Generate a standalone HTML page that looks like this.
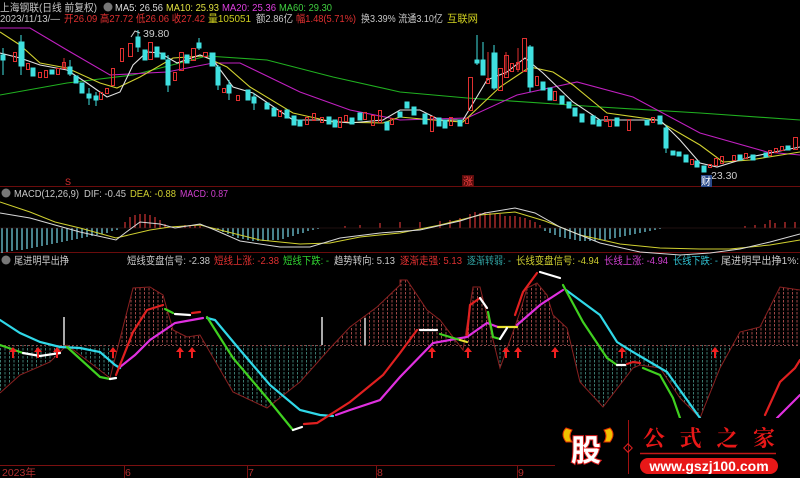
<!DOCTYPE html>
<html><head><meta charset="utf-8"><style>
body{margin:0;background:#000;width:800px;height:478px;overflow:hidden;font-family:"Liberation Sans","Noto Sans CJK SC",sans-serif}
svg{position:absolute;left:0;top:0;font-family:"Liberation Sans","Noto Sans CJK SC",sans-serif;font-size:10.5px}
</style></head><body>
<svg width="800" height="478" viewBox="0 0 800 478">
<defs>
<pattern id="hr" width="4.5" height="4" patternUnits="userSpaceOnUse"><rect x="0" y="0" width="1" height="2.5" fill="#a04848"/></pattern>
<pattern id="hg" width="4.5" height="4" patternUnits="userSpaceOnUse"><rect x="0" y="0" width="1" height="2.5" fill="#3c7a70"/></pattern>
<clipPath id="up"><rect x="0" y="260" width="800" height="85"/></clipPath>
<clipPath id="dn"><rect x="0" y="345" width="800" height="120"/></clipPath>
</defs>
<line x1="0" y1="186.5" x2="800" y2="186.5" stroke="#6a0c0c"/>
<line x1="0" y1="252.5" x2="800" y2="252.5" stroke="#6a0c0c"/>
<line x1="0" y1="465.5" x2="555" y2="465.5" stroke="#7a1010"/>
<g stroke="#7a1010"><line x1="124.5" y1="465" x2="124.5" y2="478"/><line x1="247.5" y1="465" x2="247.5" y2="478"/><line x1="376.5" y1="465" x2="376.5" y2="478"/><line x1="517.5" y1="465" x2="517.5" y2="478"/></g>
<g fill="#b03030"><text x="2" y="476">2023年</text><text x="125" y="476">6</text><text x="248" y="476">7</text><text x="377" y="476">8</text><text x="518" y="476">9</text></g>

<g lengthAdjust="spacingAndGlyphs">
<text x="0" y="11" fill="#c8c8c8" textLength="97" lengthAdjust="spacingAndGlyphs">上海钢联(日线 前复权)</text>
<text x="115" y="11" fill="#ddd" textLength="48" lengthAdjust="spacingAndGlyphs">MA5: 26.56</text>
<text x="166" y="11" fill="#e0e040" textLength="53" lengthAdjust="spacingAndGlyphs">MA10: 25.93</text>
<text x="222" y="11" fill="#e040e0" textLength="54" lengthAdjust="spacingAndGlyphs">MA20: 25.36</text>
<text x="279" y="11" fill="#40d040" textLength="53" lengthAdjust="spacingAndGlyphs">MA60: 29.30</text>
<text x="0" y="22" fill="#c8c8c8" textLength="60" lengthAdjust="spacingAndGlyphs">2023/11/13/—</text>
<text x="64" y="22" fill="#e03030" textLength="141" lengthAdjust="spacingAndGlyphs">开26.09 高27.72 低26.06 收27.42</text>
<text x="208" y="22" fill="#d0d020" textLength="43" lengthAdjust="spacingAndGlyphs">量105051</text>
<text x="256" y="22" fill="#c8c8c8" textLength="37" lengthAdjust="spacingAndGlyphs">额2.86亿</text>
<text x="296" y="22" fill="#e03030" textLength="60" lengthAdjust="spacingAndGlyphs">幅1.48(5.71%)</text>
<text x="361" y="22" fill="#c8c8c8" textLength="82" lengthAdjust="spacingAndGlyphs">换3.39% 流通3.10亿</text>
<text x="447" y="22" fill="#d0d020" textLength="31" lengthAdjust="spacingAndGlyphs">互联网</text>
</g>
<circle cx="108" cy="7" r="4.5" fill="#777"/>

<g fill="none" stroke-width="1.1">
<polyline stroke="#20b020" points="0,95 67,83 133,75 207,56 267,60 333,77 400,92 467,98 600,107 700,113 800,120"/>
<polyline stroke="#c020c0" points="0,28 30,28 67,50 110,75 167,72 213,63 240,63 300,92 350,110 400,120 467,118 517,95 577,82 633,97 700,133 767,152 800,155"/>
<polyline stroke="#d0d030" points="0,32 20,45 40,63 67,68 100,83 117,88 140,77 173,58 203,56 227,67 250,87 293,113 333,122 383,123 400,117 433,120 463,122 500,87 530,67 553,72 573,85 607,113 657,120 700,145 723,162 750,160 800,152"/>
<polyline stroke="#e0e0e0" points="0,53 20,58 40,65 67,70 87,83 107,97 120,92 133,65 147,52 160,53 177,63 200,55 213,60 233,87 253,93 293,120 320,120 350,123 383,120 400,110 420,110 440,120 463,120 487,80 507,72 525,58 543,73 573,102 600,120 660,120 680,140 700,163 717,167 750,157 800,147"/>
</g>
<g stroke-width="1">
<g stroke="#40e0e0" fill="#40e0e0">
<line x1="3" y1="48" x2="3" y2="75"/><rect x="1" y="55" width="4" height="5"/>
<line x1="21" y1="35" x2="21" y2="75"/><rect x="19" y="42" width="5" height="24"/>
<rect x="31" y="68" width="4" height="8"/><rect x="50" y="70" width="4" height="4"/>
<line x1="70" y1="60" x2="70" y2="76"/><rect x="68" y="67" width="4" height="7"/>
<rect x="74" y="76" width="4" height="7"/><rect x="80" y="83" width="4" height="10"/>
<line x1="89" y1="88" x2="89" y2="105"/><rect x="87" y="94" width="4" height="4"/>
<line x1="96" y1="92" x2="96" y2="106"/><rect x="94" y="96" width="4" height="4"/>
<line x1="138" y1="30" x2="138" y2="52"/><rect x="136" y="37" width="4" height="10"/>
<rect x="143" y="50" width="4" height="10"/><rect x="155" y="47" width="4" height="10"/><rect x="161" y="53" width="4" height="6"/>
<line x1="168" y1="55" x2="168" y2="92"/><rect x="166" y="60" width="4" height="25"/>
<rect x="185" y="55" width="4" height="8"/><line x1="199" y1="38" x2="199" y2="50"/><rect x="197" y="43" width="4" height="5"/>
<rect x="210" y="53" width="5" height="13"/><line x1="218" y1="65" x2="218" y2="90"/><rect x="216" y="67" width="4" height="18"/>
<line x1="229" y1="80" x2="229" y2="100"/><rect x="227" y="85" width="4" height="8"/>
<rect x="246" y="90" width="4" height="10"/><line x1="254" y1="93" x2="254" y2="110"/><rect x="252" y="97" width="4" height="6"/>
<rect x="265" y="103" width="4" height="6"/><rect x="272" y="108" width="4" height="8"/><rect x="285" y="110" width="4" height="8"/>
<rect x="292" y="116" width="4" height="9"/><rect x="298" y="120" width="4" height="6"/><rect x="327" y="117" width="4" height="7"/>
<rect x="333" y="120" width="4" height="7"/><rect x="350" y="118" width="4" height="6"/><rect x="358" y="113" width="4" height="7"/>
<rect x="385" y="122" width="4" height="8"/><rect x="398" y="112" width="4" height="5"/><rect x="405" y="102" width="4" height="6"/>
<rect x="412" y="107" width="4" height="8"/><rect x="423" y="114" width="4" height="10"/><rect x="437" y="118" width="4" height="8"/>
<rect x="443" y="120" width="4" height="8"/><rect x="458" y="120" width="4" height="6"/>
<line x1="477" y1="35" x2="477" y2="65"/><rect x="475" y="60" width="4" height="3"/>
<line x1="483" y1="42" x2="483" y2="75"/><rect x="481" y="60" width="4" height="15"/>
<line x1="494" y1="45" x2="494" y2="90"/><rect x="492" y="53" width="5" height="35"/>
<line x1="530" y1="45" x2="530" y2="92"/><rect x="528" y="47" width="5" height="40"/>
<rect x="541" y="82" width="4" height="8"/><rect x="548" y="88" width="4" height="12"/><rect x="560" y="96" width="4" height="8"/>
<rect x="567" y="102" width="4" height="6"/><rect x="573" y="108" width="4" height="8"/><rect x="580" y="114" width="4" height="8"/>
<rect x="591" y="116" width="4" height="8"/><rect x="597" y="120" width="4" height="6"/><rect x="615" y="118" width="4" height="8"/>
<rect x="645" y="120" width="4" height="5"/><rect x="658" y="116" width="4" height="8"/>
<line x1="666" y1="125" x2="666" y2="153"/><rect x="664" y="128" width="4" height="20"/>
<rect x="671" y="151" width="4" height="4"/><rect x="677" y="152" width="4" height="4"/><rect x="684" y="155" width="4" height="7"/>
<rect x="695" y="161" width="4" height="6"/><rect x="702" y="166" width="4" height="6"/><rect x="738" y="155" width="4" height="5"/>
<rect x="751" y="155" width="4" height="5"/><rect x="764" y="153" width="4" height="4"/><rect x="786" y="146" width="4" height="4"/>
</g>
<g stroke="#e03030" fill="none">
<rect x="13.5" y="52.5" width="3" height="9"/><rect x="26.5" y="63.5" width="3" height="6"/><rect x="38.5" y="72.5" width="3" height="5"/>
<rect x="44.5" y="70.5" width="3" height="7"/><line x1="64" y1="58" x2="64" y2="68"/><rect x="56.5" y="68.5" width="3" height="6"/><rect x="62.5" y="62.5" width="3" height="6"/>
<rect x="99.5" y="92.5" width="3" height="7"/><rect x="105.5" y="88.5" width="3" height="5"/><rect x="111.5" y="68.5" width="3" height="17"/>
<rect x="120.5" y="48.5" width="3" height="13"/><rect x="128.5" y="43.5" width="4" height="13"/><rect x="148.5" y="42.5" width="4" height="17"/>
<rect x="173.5" y="72.5" width="3" height="8"/><rect x="179.5" y="52.5" width="4" height="18"/><rect x="191.5" y="48.5" width="4" height="12"/><rect x="203.5" y="52.5" width="4" height="4"/>
<rect x="222.5" y="88.5" width="3" height="4"/><rect x="236.5" y="95.5" width="3" height="5"/><rect x="278.5" y="110.5" width="3" height="6"/>
<rect x="305.5" y="117.5" width="3" height="7"/><rect x="312.5" y="113.5" width="3" height="7"/><rect x="320.5" y="117.5" width="3" height="5"/>
<rect x="338.5" y="117.5" width="3" height="10"/><rect x="344.5" y="115.5" width="3" height="6"/><rect x="363.5" y="112.5" width="3" height="7"/>
<rect x="371.5" y="115.5" width="3" height="10"/><rect x="378.5" y="110.5" width="3" height="12"/><rect x="390.5" y="118.5" width="3" height="6"/>
<rect x="430.5" y="116.5" width="3" height="15"/><rect x="449.5" y="117.5" width="3" height="8"/><rect x="465.5" y="118.5" width="3" height="5"/>
<rect x="468.5" y="77.5" width="4" height="33"/><line x1="488" y1="52" x2="488" y2="80"/><rect x="486.5" y="78.5" width="3" height="5"/>
<rect x="498.5" y="68.5" width="4" height="22"/><line x1="506" y1="52" x2="506" y2="75"/><rect x="504.5" y="55.5" width="4" height="22"/>
<rect x="510.5" y="63.5" width="3" height="8"/><line x1="518" y1="48" x2="518" y2="72"/><rect x="516.5" y="62.5" width="3" height="7"/>
<rect x="522.5" y="38.5" width="4" height="33"/><rect x="535.5" y="76.5" width="3" height="9"/><rect x="553.5" y="91.5" width="3" height="9"/>
<rect x="604.5" y="116.5" width="3" height="5"/><rect x="608.5" y="120.5" width="3" height="6"/><rect x="627.5" y="119.5" width="3" height="11"/>
<rect x="651.5" y="117.5" width="3" height="5"/><rect x="690.5" y="159.5" width="3" height="5"/><rect x="708.5" y="164.5" width="3" height="3"/>
<rect x="714.5" y="158.5" width="3" height="7"/><rect x="720.5" y="156.5" width="3" height="7"/><rect x="732.5" y="155.5" width="3" height="5"/>
<rect x="744.5" y="153.5" width="3" height="5"/><rect x="768.5" y="150.5" width="3" height="5"/><rect x="774.5" y="148.5" width="3" height="4"/><rect x="780.5" y="146.5" width="3" height="4"/><rect x="793.5" y="137.5" width="4" height="12"/>
</g></g>
<polyline points="131,37 135,31 140,33" fill="none" stroke="#ccc"/>
<text x="143" y="37" fill="#ccc">39.80</text>
<polyline points="704,180 707,177 710,177" fill="none" stroke="#ccc"/>
<text x="711" y="179" fill="#ccc">23.30</text>
<rect x="701" y="175" width="11" height="12" fill="#2a4a8a"/><text x="701" y="185" fill="#fff" font-size="10">财</text>
<rect x="462" y="175" width="12" height="11" fill="#5a0c0c"/><text x="463" y="185" fill="#f04040" font-size="10">涨</text>
<text x="65" y="185" fill="#e03030" font-size="9">S</text>

<circle cx="6" cy="193" r="4.5" fill="#777"/>
<text x="14" y="197" fill="#c8c8c8" textLength="65" lengthAdjust="spacingAndGlyphs">MACD(12,26,9)</text>
<text x="84" y="197" fill="#c8c8c8" textLength="42" lengthAdjust="spacingAndGlyphs">DIF: -0.45</text>
<text x="130" y="197" fill="#d0d030" textLength="46" lengthAdjust="spacingAndGlyphs">DEA: -0.88</text>
<text x="180" y="197" fill="#d040d0" textLength="48" lengthAdjust="spacingAndGlyphs">MACD: 0.87</text>
<g stroke="#70c8d8" stroke-width="1.3">
<path d="M2 228V253M7 228V252M12 228V251M17 228V250M22 228V250M27 228V249M32 228V248M37 228V247M42 228V246M47 228V245M52 228V244M57 228V243M62 228V242M67 228V241M72 228V240M77 228V239M82 228V238M87 228V237M92 228V236M97 228V235M102 228V234M107 228V233M112 228V231M117 228V230"/>
<path d="M218 228V230M223 228V232M228 228V234M233 228V236M238 228V238M243 228V239M248 228V240M253 228V241M258 228V241M263 228V241M268 228V241M273 228V240M278 228V240M283 228V239M288 228V237M293 228V236M298 228V234M303 228V233M308 228V231M313 228V230M318 228V229"/>
<path d="M545 228V231M550 228V233M555 228V235M560 228V237M565 228V238M570 228V239M575 228V240M580 228V241M585 228V241M590 228V241M595 228V241M600 228V240M605 228V240M610 228V239M615 228V238M620 228V237M625 228V236M630 228V235M635 228V234M640 228V233M645 228V232M650 228V231M655 228V230M660 228V229"/>
</g>
<g stroke="#c03030" stroke-width="1.3">
<path d="M125 228V222M130 228V217M135 228V215M140 228V214M145 228V214M150 228V215M155 228V217M160 228V220M165 228V224M180 228V226M185 228V225M190 228V225M195 228V225M200 228V226"/>
<path d="M345 228V226M360 228V225M380 228V223M400 228V222M420 228V222M440 228V221M450 228V220M460 228V218M470 228V214M475 228V212M480 228V213M485 228V212M490 228V213M495 228V214M500 228V214M505 228V216M510 228V216M515 228V216M520 228V217M525 228V218M530 228V220M535 228V222M540 228V225"/>
<path d="M745 228V226M755 228V225M765 228V224M775 228V223M785 228V222M795 228V222M770 228V220"/>
</g>
<line x1="0" y1="228" x2="800" y2="228" stroke="#402020" stroke-width="0.5"/>
<polyline fill="none" stroke="#d0d030" points="0,202 30,212 55,222 80,228 116,238 150,230 170,227 200,225 220,230 260,240 300,244 330,243 360,237 400,233 440,225 480,215 515,212 545,221 580,235 620,244 660,248 700,249 730,249 770,245 800,240"/>
<polyline fill="none" stroke="#d8d8d8" points="0,213 30,218 55,225 80,232 116,240 125,233 140,222 160,224 175,228 200,224 215,230 240,241 280,247 310,247 340,238 380,233 420,230 460,221 485,213 515,208 535,213 560,227 600,243 640,252 680,255 710,253 740,249 770,242 800,234"/>

<circle cx="6" cy="260" r="4.5" fill="#777"/>
<text x="14" y="264" fill="#c8c8c8" textLength="55" lengthAdjust="spacingAndGlyphs">尾进明早出挣</text>
<text x="127" y="264" fill="#c8c8c8" textLength="83" lengthAdjust="spacingAndGlyphs">短线变盘信号: -2.38</text>
<text x="214" y="264" fill="#e03030" textLength="65" lengthAdjust="spacingAndGlyphs">短线上涨: -2.38</text>
<text x="283" y="264" fill="#30d030" textLength="46" lengthAdjust="spacingAndGlyphs">短线下跌: -</text>
<text x="334" y="264" fill="#c8c8c8" textLength="61" lengthAdjust="spacingAndGlyphs">趋势转向: 5.13</text>
<text x="400" y="264" fill="#e03030" textLength="62" lengthAdjust="spacingAndGlyphs">逐渐走强: 5.13</text>
<text x="467" y="264" fill="#30a0a0" textLength="44" lengthAdjust="spacingAndGlyphs">逐渐转弱: -</text>
<text x="516" y="264" fill="#d0d030" textLength="83" lengthAdjust="spacingAndGlyphs">长线变盘信号: -4.94</text>
<text x="604" y="264" fill="#d040d0" textLength="64" lengthAdjust="spacingAndGlyphs">长线上涨: -4.94</text>
<text x="673" y="264" fill="#30c0d0" textLength="45" lengthAdjust="spacingAndGlyphs">长线下跌: -</text>
<text x="721" y="264" fill="#c8c8c8" textLength="78" lengthAdjust="spacingAndGlyphs">尾进明早出挣1%:</text>

<g>
<polygon clip-path="url(#up)" fill="url(#hr)" points="0,345 0,393 20,375 50,362 67,345 110,378 133,288 150,287 163,295 173,330 187,337 200,335 233,392 267,408 300,382 333,345 350,327 377,307 400,285 400,280 407,280 427,310 440,320 463,350 473,287 480,287 500,368 513,332 520,312 527,288 537,283 547,295 553,315 567,328 580,382 603,407 633,368 640,365 660,368 680,398 700,418 720,368 740,332 760,327 780,287 800,290 800,345"/>
<polygon clip-path="url(#dn)" fill="url(#hg)" points="0,345 0,393 20,375 50,362 67,345 110,378 133,288 150,287 163,295 173,330 187,337 200,335 233,392 267,408 300,382 333,345 350,327 377,307 400,285 400,280 407,280 427,310 440,320 463,350 473,287 480,287 500,368 513,332 520,312 527,288 537,283 547,295 553,315 567,328 580,382 603,407 633,368 640,365 660,368 680,398 700,418 720,368 740,332 760,327 780,287 800,290 800,345"/>
<line x1="0" y1="345.5" x2="800" y2="345.5" stroke="#8a4a4a" stroke-dasharray="2 2"/>
<polyline fill="none" stroke="#8a2020" points="0,393 20,375 50,362 67,345 110,378 133,288 150,287 163,295 173,330 187,337 200,335 233,392 267,408 300,382 333,345 350,327 377,307 400,285 400,280 407,280 427,310 440,320 463,350 473,287 480,287 500,368 513,332 520,312 527,288 537,283 547,295 553,315 567,328 580,382 603,407 633,368 640,365 660,368 680,398 700,418 720,368 740,332 760,327 780,287 800,290"/>
</g>
<g stroke="#aaa" stroke-width="2"><line x1="64" y1="317" x2="64" y2="345"/><line x1="322" y1="317" x2="322" y2="345"/><line x1="365" y1="318" x2="365" y2="345"/></g>
<g fill="none" stroke-width="2.2" stroke-linecap="round">
<polyline stroke="#30d8e8" points="0,320 20,333 40,342 60,347 80,348 100,352 115,365 120,368"/>
<polyline stroke="#e030e0" points="120,367 135,355 150,340 175,323 203,318"/>
<polyline stroke="#30d8e8" points="207,318 215,320 240,350 270,385 300,410 320,415 333,416"/>
<polyline stroke="#e030e0" points="336,415 350,410 380,400 400,377 433,343 467,337 487,323 498,327"/>
<polyline stroke="#e8e030" points="498,327 517,327"/>
<polyline stroke="#e030e0" points="517,325 540,305 563,290"/>
<polyline stroke="#30d8e8" points="566,290 600,315 617,342 633,352 667,372 700,418 705,430"/>
<polyline stroke="#e030e0" points="777,418 800,395"/>
<polyline stroke="#40d020" points="0,345 23,353"/>
<polyline stroke="#fff" points="23,353 40,356 60,353"/>
<polyline stroke="#40d020" points="67,347 100,377 110,379"/>
<polyline stroke="#fff" points="110,379 116,378"/>
<polyline stroke="#e02020" points="116,375 133,332 147,310 163,305"/>
<polyline stroke="#40d020" points="165,309 173,313"/>
<polyline stroke="#fff" points="175,314 190,315"/>
<polyline stroke="#e02020" points="192,313 200,312"/>
<polyline stroke="#40d020" points="207,317 233,358 267,398 293,430"/>
<polyline stroke="#fff" points="293,430 302,427"/>
<polyline stroke="#e02020" points="304,424 317,423 350,402 383,375 400,353 417,330"/>
<polyline stroke="#fff" points="420,330 437,330"/>
<polyline stroke="#40d020" points="440,334 460,340"/>
<polyline stroke="#e8e030" points="460,340 467,342"/>
<polyline stroke="#e02020" points="467,335 470,305 480,298"/>
<polyline stroke="#fff" points="480,298 487,308"/>
<polyline stroke="#40d020" points="488,312 493,337 500,339"/>
<polyline stroke="#fff" points="500,339 507,328"/>
<polyline stroke="#e02020" points="515,315 523,292 537,273"/>
<polyline stroke="#fff" points="540,272 560,278"/>
<polyline stroke="#40d020" points="563,285 583,322 607,358 617,365"/>
<polyline stroke="#fff" points="617,365 625,365"/>
<polyline stroke="#e02020" points="627,364 633,362 640,363"/>
<polyline stroke="#40d020" points="643,368 660,375 673,398 680,418"/>
<polyline stroke="#e02020" points="765,415 780,382 795,368 800,360"/>
</g>
<g fill="#f02020">
<path d="M13 347l-4 5h3v6h2v-6h3z"/><path d="M38 347l-4 5h3v6h2v-6h3z"/><path d="M57 347l-4 5h3v6h2v-6h3z"/>
<path d="M113 347l-4 5h3v6h2v-6h3z"/><path d="M180 347l-4 5h3v6h2v-6h3z"/><path d="M192 347l-4 5h3v6h2v-6h3z"/>
<path d="M432 347l-4 5h3v6h2v-6h3z"/><path d="M468 347l-4 5h3v6h2v-6h3z"/><path d="M506 347l-4 5h3v6h2v-6h3z"/>
<path d="M518 347l-4 5h3v6h2v-6h3z"/><path d="M555 347l-4 5h3v6h2v-6h3z"/><path d="M622 347l-4 5h3v6h2v-6h3z"/><path d="M715 347l-4 5h3v6h2v-6h3z"/>
</g>

<rect x="555" y="418" width="245" height="60" fill="#000"/>
<path d="M566 428 q-6 6 0 14 l6 0 q-4-6 0-12z" fill="#f0c000" stroke="#e03000"/>
<path d="M610 428 q6 6 0 14 l-6 0 q4-6 0-12z" fill="#f0c000" stroke="#e03000"/>
<text x="571" y="461" font-size="30" font-weight="bold" fill="#fff" stroke="#e02020" stroke-width="2" paint-order="stroke">股</text>
<line x1="628.5" y1="420" x2="628.5" y2="474" stroke="#a01010"/>
<rect x="625" y="445" width="6" height="6" transform="rotate(45 628 448)" fill="none" stroke="#e02020"/>
<text x="643" y="446" font-size="22" font-weight="bold" fill="#e81818" textLength="132" lengthAdjust="spacing" font-family="'Noto Serif CJK SC',serif">公式之家</text>
<line x1="640" y1="453.5" x2="776" y2="453.5" stroke="#c01818" stroke-width="1.5"/>
<rect x="640" y="458" width="138" height="16" rx="8" fill="#e81818"/>
<text x="709" y="471" font-size="14" font-weight="bold" fill="#fff" text-anchor="middle">www.gszj100.com</text>
</svg>
</body></html>
